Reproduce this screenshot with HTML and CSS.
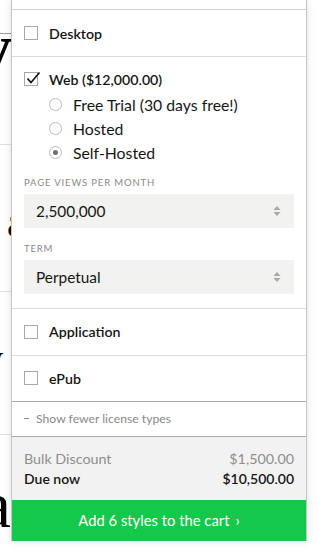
FILE: index.html
```html
<!DOCTYPE html>
<html>
<head>
<meta charset="utf-8">
<link rel="stylesheet" href="styles.css">
</head>
<body>
<div class="page">
  <div class="bg">
    <div class="bg-row r1"></div>
    <div class="bg-row r2"><span class="glyph g1">V</span></div>
    <div class="bg-row r3"><span class="glyph g2">a</span></div>
    <div class="bg-row r4"><span class="glyph g3">v</span></div>
    <div class="bg-row r5"><span class="glyph g4">a</span></div>
  </div>

  <div class="panel">
    <div class="tail"></div>

    <div class="row">
      <label class="opt"><span class="box"></span><span>Desktop</span></label>
    </div>

    <div class="row web">
      <label class="opt"><span class="box checked">
        <svg viewBox="0 0 16 16" width="16" height="16"><path d="M2.5 8.5 L6 12.5 L14.5 2.5" fill="none" stroke="#111" stroke-width="1.6"/></svg>
      </span><span>Web ($12,000.00)</span></label>
      <div class="radios">
        <label class="radio"><span class="circle"></span><span>Free Trial (30 days free!)</span></label>
        <label class="radio"><span class="circle"></span><span>Hosted</span></label>
        <label class="radio"><span class="circle on"></span><span>Self-Hosted</span></label>
      </div>
      <div class="field">
        <div class="flabel">PAGE VIEWS PER MONTH</div>
        <div class="select"><span>2,500,000</span>
          <svg class="arrows" viewBox="0 0 8 10" width="8" height="10"><path d="M4 0 L7.5 4 L0.5 4 Z M4 10 L7.5 6 L0.5 6 Z" fill="#a8a8a8"/></svg>
        </div>
      </div>
      <div class="field">
        <div class="flabel">TERM</div>
        <div class="select"><span>Perpetual</span>
          <svg class="arrows" viewBox="0 0 8 10" width="8" height="10"><path d="M4 0 L7.5 4 L0.5 4 Z M4 10 L7.5 6 L0.5 6 Z" fill="#a8a8a8"/></svg>
        </div>
      </div>
    </div>

    <div class="row">
      <label class="opt"><span class="box"></span><span>Application</span></label>
    </div>

    <div class="row last">
      <label class="opt"><span class="box"></span><span>ePub</span></label>
    </div>

    <div class="fewer"><span class="dash"></span><span>Show fewer license types</span></div>

    <div class="totals">
      <div class="line muted"><span>Bulk Discount</span><span>$1,500.00</span></div>
      <div class="line"><span>Due now</span><span>$10,500.00</span></div>
    </div>

    <div class="cta">Add 6 styles to the cart <span class="chev">›</span></div>
  </div>
</div>
</body>
</html>
```

FILE: styles.css
```css
* { box-sizing: border-box; }
html, body { margin: 0; padding: 0; background: #fff; }
body { font-family: Lato, "Noto Sans", sans-serif; color: #161616; }

.page { position: relative; width: 319px; height: 553px; overflow: hidden; }

.bg { display: flex; flex-direction: column; width: 11px; }
.bg-row { position: relative; overflow: hidden; border-bottom: 1px solid #e0e0e0; }
.r1 { height: 34px; border-bottom-color: #9a9a9a; }
.r2 { height: 111px; }
.r3 { height: 147px; }
.r4 { height: 143px; }
.r5 { height: 118px; border-bottom: none; }
.glyph { position: absolute; font-family: "Liberation Serif", serif; color: #000; line-height: 1; }
.g1 { font-size: 60px; font-weight: bold; left: -30px; top: -6px; }
.g2 { font-size: 40px; left: 7px; top: 58px; }
.g3 { font-size: 40px; left: -17px; top: 47px; }
.g4 { font-size: 65px; left: -18px; top: 38px; }

.panel {
  position: absolute; left: 11px; top: 0; width: 296px;
  background: #fff;
  border-left: 1px solid #c4c4c4; border-right: 1px solid #c4c4c4;
  box-shadow: 0 0 8px rgba(0,0,0,0.12);
  display: flex; flex-direction: column;
}
.tail { height: 10px; border-bottom: 1px solid #d0d0d0; }

.row { border-bottom: 1px solid #dcdcdc; padding: 0 12px; height: 47px; display: flex; align-items: center; }
.row.web { height: auto; display: block; padding: 14px 12px 14px; }
.row.last { border-bottom-color: #a9a9a9; height: 46px; }

.opt { display: flex; align-items: center; gap: 11px; font-size: 14.2px; font-weight: 600; height: 16px; }
.box { width: 14px; height: 14px; border: 1px solid #a8a8a8; position: relative; flex: none; }
.box.checked svg { position: absolute; left: 0; top: -3px; }

.radios { display: flex; flex-direction: column; padding-left: 25px; margin-top: 5px; }
.radio { display: flex; align-items: center; gap: 11px; font-size: 15.8px; height: 24.33px; }
.circle { width: 13px; height: 13px; border-radius: 50%; border: 1px solid #bcbcbc; flex: none; position: relative; }
.circle.on::after { content: ""; position: absolute; left: 3px; top: 3px; width: 5px; height: 5px; border-radius: 50%; background: #707070; }

.radios + .field { margin-top: 12px; }
.field + .field { margin-top: 15px; }
.flabel { font-size: 9.5px; letter-spacing: 0.85px; color: #8a8a8a; height: 12px; line-height: 12px; margin-bottom: 5px; }
.select { height: 34px; background: #f2f2f0; display: flex; align-items: center; justify-content: space-between; padding: 0 13px 0 12px; font-size: 15.4px; }
.arrows { display: block; }

.fewer { height: 35px; display: flex; align-items: center; gap: 7px; padding: 0 12px; font-size: 12.2px; color: #8a8a8a; border-bottom: 1px solid #a9a9a9; }
.dash { width: 5px; height: 1px; background: #8a8a8a; }

.totals { background: #f2f2f2; padding: 12px 12px 11px; display: flex; flex-direction: column; }
.line { display: flex; justify-content: space-between; font-size: 14px; font-weight: 600; height: 20px; align-items: center; }
.line.muted { color: #8e8e8e; font-weight: 400; font-size: 14.3px; }

.cta { height: 41px; background: #14c84b; color: #fff; display: flex; align-items: center; justify-content: center; font-size: 14.8px; gap: 6px; }
.chev { font-size: 15px; }
```
